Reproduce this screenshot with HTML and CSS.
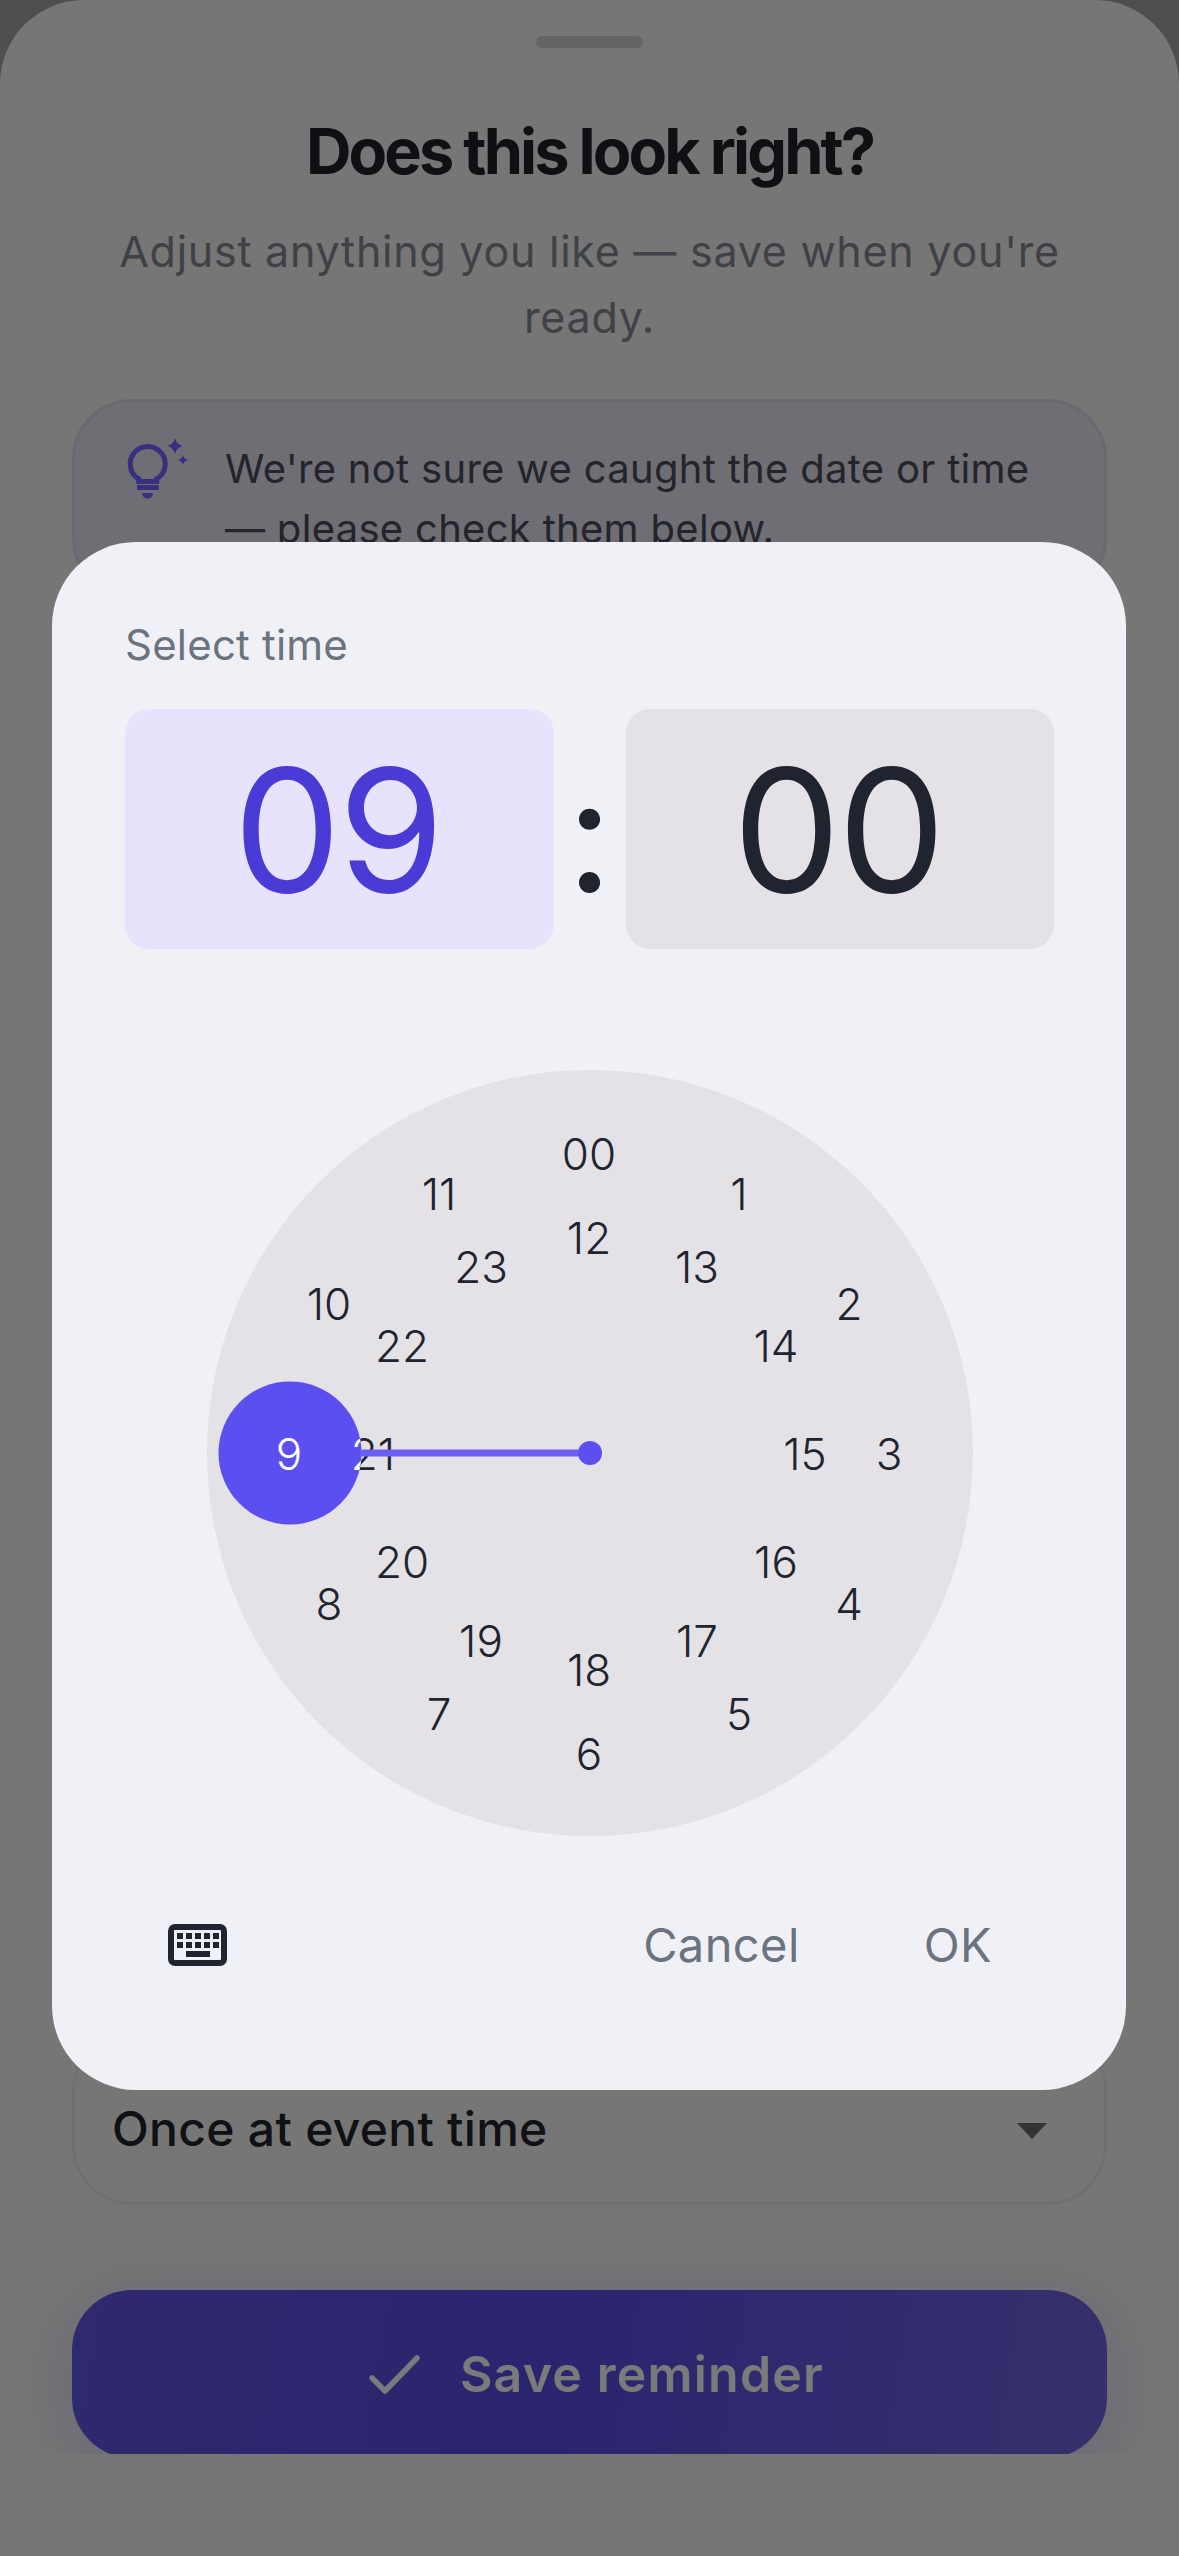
FILE: index.html
```html
<!DOCTYPE html>
<html lang="en">
<head>
<meta charset="utf-8">
<title>Does this look right?</title>
<link rel="stylesheet" href="styles.css">
</head>
<body>
<div class="sheet">
  <div class="sheet-scroll">
    <div class="handle"></div>
    <h1 class="title">Does this look right?</h1>
    <p class="subtitle">Adjust anything you like — save when you're ready.</p>
    <div class="notice">
      <svg class="notice-icon" viewBox="0 0 72 66" width="72" height="66" aria-hidden="true">
        <path class="bulb-line" d="M15.7 41A17.5 17.5 0 1 1 33.7 41V43.5H15.7Z"/>
        <path class="bulb-fill" d="M14 47H35.7V52H14Z"/>
        <path class="bulb-fill" d="M19 55H30A5.5 5.5 0 0 1 19 55Z"/>
        <path class="bulb-fill" d="M52 0Q53.5 6.5 60 8Q53.5 9.5 52 16Q50.500 9.500 44 8Q50.500 6.500 52 0Z"/>
        <path class="bulb-fill" d="M60 17Q61 21 65 22Q61 23 60 27Q59 23 55 22Q59 21 60 17Z"/>
      </svg>
      <p class="notice-text">We're not sure we caught the date or time — please check them below.</p>
    </div>
    <div class="covered-fields"></div>
    <div class="select">
      <span class="select-value">Once at event time</span>
      <span class="select-arrow"></span>
    </div>
    <div class="save">
      <svg class="save-icon" viewBox="0 0 66 66" width="66" height="66" aria-hidden="true">
        <path d="M9 37L22 50L54 17"/>
      </svg>
      <span class="save-label">Save reminder</span>
    </div>
  </div>
</div>
<div class="scrim"></div>
<section class="dialog">
  <div class="dialog-label">Select time</div>
  <div class="time-row">
    <div class="time-box time-box-active">09</div>
    <div class="time-colon">:</div>
    <div class="time-box">00</div>
  </div>
  <svg class="clock" viewBox="-383 -383 766 766" width="766" height="766">
    <defs>
      <clipPath id="selector-clip"><circle cx="-300" cy="0" r="71.500"/></clipPath>
    </defs>
    <circle class="clock-face" cx="0" cy="0" r="383"/>
    <g class="clock-nums" transform="translate(-1 17)">
      <text x="0" y="-300">00</text>
      <text x="150" y="-260">1</text>
      <text x="260" y="-150">2</text>
      <text x="300" y="0">3</text>
      <text x="260" y="150">4</text>
      <text x="150" y="260">5</text>
      <text x="0" y="300">6</text>
      <text x="-150" y="260">7</text>
      <text x="-260" y="150">8</text>
      <text x="-260" y="-150">10</text>
      <text x="-150" y="-260">11</text>
      <text x="0" y="-216">12</text>
      <text x="108" y="-187">13</text>
      <text x="187" y="-108">14</text>
      <text x="216" y="0">15</text>
      <text x="187" y="108">16</text>
      <text x="108" y="187">17</text>
      <text x="0" y="216">18</text>
      <text x="-108" y="187">19</text>
      <text x="-187" y="108">20</text>
      <text x="-216" y="0">21</text>
      <text x="-187" y="-108">22</text>
      <text x="-108" y="-187">23</text>
    </g>
    <circle class="clock-selector" cx="-300" cy="0" r="71.500"/>
    <line class="clock-hand" x1="-230" y1="0" x2="0" y2="0"/>
    <circle class="clock-pin" cx="0" cy="0" r="12"/>
    <g class="clock-nums clock-nums-on" transform="translate(-1 17)">
      <text x="-300" y="0">9</text>
    </g>
    <g clip-path="url(#selector-clip)">
      <g class="clock-nums clock-nums-on" transform="translate(-1 17)">
        <text x="-216" y="0">21</text>
      </g>
    </g>
  </svg>
  <div class="actions">
    <svg class="keyboard" viewBox="0 0 59 42" width="59" height="42" aria-label="Keyboard">
      <rect class="kb-frame" x="3" y="3" width="53" height="36" rx="4"/>
      <path class="kb-keys" d="M9 9h6v6H9zM18 9h6v6h-6zM27 9h6v6h-6zM36 9h6v6h-6zM45 9h6v6h-6zM9 18h6v6H9zM18 18h6v6h-6zM27 18h6v6h-6zM36 18h6v6h-6zM45 18h6v6h-6zM18 27h24v6H18z"/>
    </svg>
    <span class="action action-cancel">Cancel</span>
    <span class="action">OK</span>
  </div>
</section>
</body>
</html>
```
FILE: styles.css
```css
* { box-sizing: border-box; }
html, body { margin: 0; padding: 0; }
body {
  position: relative;
  width: 1179px;
  height: 2556px;
  overflow: hidden;
  background: #9e9e9e;
  font-family: Inter, "Noto Sans", sans-serif;
}
.sheet {
  height: 2556px;
  background: #ececec;
  border-radius: 84px 84px 0 0;
  overflow: hidden;
}
.sheet-scroll {
  height: 2454px;
  padding: 36px 72px 0;
  overflow: hidden;
  display: flex;
  flex-direction: column;
}
.handle {
  flex: none;
  width: 107px;
  height: 12px;
  margin: 0 auto;
  border-radius: 6px;
  background: #cacaca;
}
.title {
  flex: none;
  margin: 63px 0 0;
  font-size: 63px;
  line-height: 80px;
  font-weight: 700;
  letter-spacing: -2.9px;
  text-align: center;
  color: #1e2028;
}
.subtitle {
  flex: none;
  margin: 27px 0 0;
  font-size: 43px;
  line-height: 66px;
  letter-spacing: 0.75px;
  text-align: center;
  color: #7e828e;
}
.notice {
  flex: none;
  display: flex;
  align-items: flex-start;
  gap: 30px;
  margin-top: 49px;
  padding: 37px 40px 36px 48px;
  border: 3px solid #d4d2e4;
  border-radius: 60px;
  background: #dcdce8;
}
.notice-icon { flex: none; margin-top: -1px; overflow: visible; }
.bulb-line { fill: none; stroke: #6f60fe; stroke-width: 5; }
.bulb-fill { fill: #6f60fe; }
.notice-text {
  margin: 0;
  font-size: 40px;
  line-height: 60px;
  letter-spacing: 0.3px;
  color: #484856;
}
.covered-fields { flex: none; height: 1433px; }
.select {
  flex: none;
  height: 174px;
  display: flex;
  align-items: center;
  justify-content: space-between;
  padding: 20px 57px 0 37px;
  border: 3px solid #e0e0e0;
  border-radius: 60px;
}
.select-value {
  font-size: 48px;
  font-weight: 500;
  letter-spacing: 0.3px;
  color: #20222a;
}
.select-arrow {
  width: 0;
  height: 0;
  margin-top: 5px;
  border-left: 15px solid transparent;
  border-right: 15px solid transparent;
  border-top: 16px solid #666;
}
.save {
  flex: none;
  height: 168px;
  margin-top: 85px;
  display: flex;
  align-items: center;
  justify-content: center;
  gap: 31px;
  padding-left: 8px;
  border-radius: 60px;
  background: linear-gradient(100deg, #5e54dc 0%, #564ae0 45%, #6c60d8 100%);
  box-shadow: 0 12px 60px rgba(91, 79, 239, 0.2);
}
.save-icon { flex: none; }
.save-icon path {
  fill: none;
  stroke: #f4f4f4;
  stroke-width: 5.5;
  stroke-linecap: round;
  stroke-linejoin: round;
}
.save-label {
  font-size: 50px;
  font-weight: 600;
  letter-spacing: 1.2px;
  color: #f4f4f4;
}
.scrim {
  position: absolute;
  inset: 0;
  background: rgba(0, 0, 0, 0.5);
}
.dialog {
  position: absolute;
  left: 52px;
  top: 542px;
  width: 1074px;
  height: 1548px;
  padding: 73px 72px 0 73px;
  border-radius: 84px;
  background: #f0f1f6;
}
.dialog-label {
  font-size: 42px;
  line-height: 60px;
  letter-spacing: 0.2px;
  color: #6b7280;
}
.time-row {
  display: grid;
  grid-template-columns: 1fr 72px 1fr;
  margin-top: 34px;
  height: 240px;
}
.time-box {
  display: flex;
  align-items: center;
  justify-content: center;
  padding-right: 4px;
  border-radius: 24px;
  background: #e4e1e7;
  font-size: 171px;
  font-weight: 400;
  letter-spacing: -3px;
  color: #20242f;
}
.time-box-active {
  background: #e7e3fc;
  color: #4a3ad6;
}
.time-colon {
  display: flex;
  align-items: center;
  justify-content: center;
  padding-top: 10px;
  font-size: 160px;
  color: #20242f;
}
.clock {
  display: block;
  margin: 121px auto 0;
}
.clock-face { fill: #e4e1e7; }
.clock-selector { fill: #5b4fef; }
.clock-hand { stroke: #6a5ff0; stroke-width: 7; }
.clock-pin { fill: #5b4fef; }
.clock-nums text {
  font-family: Inter, "Noto Sans", sans-serif;
  font-size: 44px;
  font-weight: 350;
  text-anchor: middle;
  fill: #20242f;
}
.clock-nums-on text { fill: #ffffff; }
.actions {
  display: flex;
  align-items: center;
  height: 42px;
  margin-top: 88px;
  padding: 0 62px 0 43px;
}
.keyboard { flex: none; margin-right: auto; }
.kb-frame { fill: none; stroke: #20242f; stroke-width: 6; }
.kb-keys { fill: #20242f; }
.action {
  margin-top: -2px;
  font-size: 47px;
  letter-spacing: 0.4px;
  color: #6b7280;
}
.action-cancel { margin-right: 124px; }
```
